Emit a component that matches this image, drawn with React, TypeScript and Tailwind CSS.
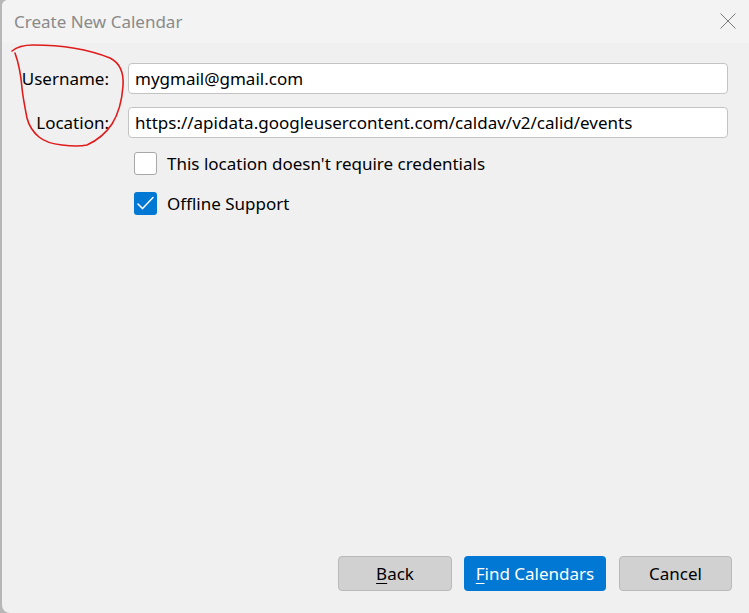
import React from "react";

function Check() {
  return (
    <svg width="23" height="23" viewBox="0 0 23 23" fill="none">
      <path d="M4 12 L8.6 16.6 L19 5.5" stroke="white" strokeWidth="1.5" strokeLinecap="round" strokeLinejoin="round" />
    </svg>
  );
}

export default function App() {
  const font = { fontFamily: '"Noto Sans", "Open Sans", sans-serif' };
  return (
    <div className="flex h-[613px] w-[749px] bg-[#b7b7b7] pl-[2px]" style={font}>
      <div className="relative flex flex-1 flex-col overflow-hidden rounded-tl-md rounded-bl-lg bg-[#f0f0f0]">
        {/* title bar */}
        <div className="flex h-[43px] shrink-0 items-center justify-between bg-[#f3f3f3] pl-[12px] pr-[13px]">
          <span className="text-[17px] text-[#8a8a8a]">Create New Calendar</span>
          <svg width="16" height="16" viewBox="0 0 16 16" className="mb-[1px]">
            <path d="M0.5 0.5 L15.5 15.5 M15.5 0.5 L0.5 15.5" stroke="#7a7a7a" strokeWidth="1" />
          </svg>
        </div>

        {/* form */}
        <div className="flex flex-col pr-[21px] pt-[20px] text-[17px] text-black">
          <div className="flex items-center">
            <label className="w-[107px] shrink-0 text-right">Username:</label>
            <div className="ml-[19px] flex h-[31px] min-w-0 flex-1 items-center rounded-[4px] border border-[#c3c3c3] bg-white pl-[6px]">
              mygmail@gmail.com
            </div>
          </div>
          <div className="mt-[13px] flex items-center">
            <label className="w-[107px] shrink-0 text-right">Location:</label>
            <div className="ml-[19px] flex h-[31px] min-w-0 flex-1 items-center whitespace-nowrap rounded-[4px] border border-[#c3c3c3] bg-white pl-[6px]">
              https://apidata.googleusercontent.com/caldav/v2/calid/events
            </div>
          </div>
          <div className="mt-[14px] flex h-[23px] items-center pl-[132px] leading-[23px]">
            <span className="h-[23px] w-[23px] shrink-0 rounded-[3px] border border-[#a8a8a8] bg-white" />
            <span className="ml-[10px]">This location doesn't require credentials</span>
          </div>
          <div className="mt-[17px] flex h-[23px] items-center pl-[132px] leading-[23px]">
            <span className="flex h-[23px] w-[23px] shrink-0 items-center justify-center rounded-[3px] bg-[#0078d4]">
              <Check />
            </span>
            <span className="ml-[10px]">Offline Support</span>
          </div>
        </div>

        <div className="flex-1" />

        {/* buttons */}
        <div className="flex justify-end gap-[12px] pb-[22px] pr-[17px] text-[17px]">
          <button className="h-[35px] w-[114px] rounded-[4px] border border-[#b9b9b9] bg-[#d1d1d1] text-black">
            <span className="underline underline-offset-[3px]">B</span>ack
          </button>
          <button className="h-[35px] w-[142px] rounded-[4px] bg-[#0078d4] text-white">
            <span className="underline underline-offset-[3px]">F</span>ind Calendars
          </button>
          <button className="ml-[1px] h-[35px] w-[113px] rounded-[4px] border border-[#b9b9b9] bg-[#d1d1d1] text-black">
            Cancel
          </button>
        </div>

        {/* red annotation (hand-drawn circle) */}
        <svg className="pointer-events-none absolute -left-[2px] top-0" width="140" height="160" viewBox="0 0 140 160">
          <path
            d="M12 51 C 18 46, 26 45, 33 45 C 55 45, 85 48, 110 58 C 120 63, 124 72, 123 86 C 122 100, 119 113, 112 124 C 106 133, 98 140, 87 145 C 78 147, 70 146, 62 145 C 52 144, 45 142, 39 137 C 33 132, 29 126, 27 118 C 25 108, 23 98, 22 88 C 21 76, 19 64, 15 53"
            fill="none"
            stroke="#e01b1b"
            strokeWidth="1.6"
            strokeLinecap="round"
          />
        </svg>
      </div>
    </div>
  );
}
